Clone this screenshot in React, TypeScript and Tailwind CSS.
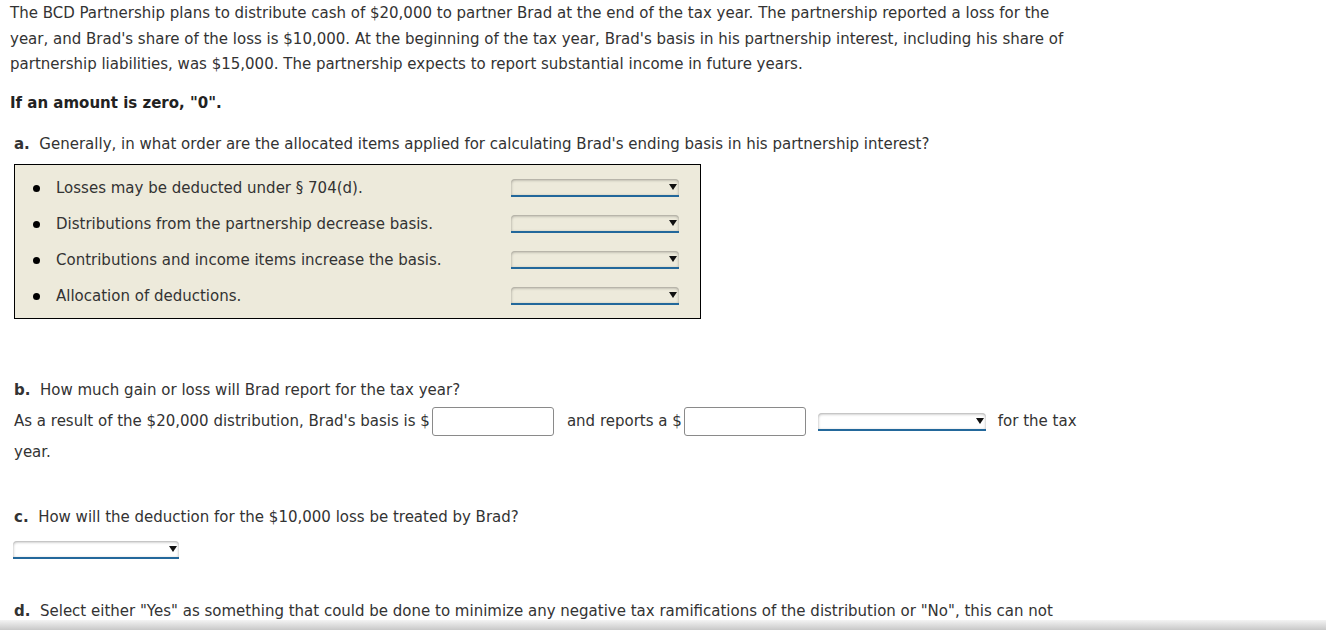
import React from 'react';

const orderItems = [
  'Losses may be deducted under § 704(d).',
  'Distributions from the partnership decrease basis.',
  'Contributions and income items increase the basis.',
  'Allocation of deductions.',
];

function Dropdown({ width }: { width: string }) {
  return (
    <span
      className={`relative inline-block h-[18px] rounded-t-[4px] border-b-2 border-[#23689b] shadow-[inset_0_1px_3px_rgba(0,0,0,0.35)] align-middle ${width}`}
    >
      <svg className="absolute right-[2px] top-[5px]" width="8" height="6" viewBox="0 0 8 6">
        <path d="M0 0 L8 0 L4 6 Z" fill="#111" />
      </svg>
    </span>
  );
}

function AmountInput() {
  return (
    <span className="ml-[2px] inline-block h-[29px] w-[122px] rounded-[3px] border border-[#8a8a8a] bg-white align-middle" />
  );
}

export default function App() {
  return (
    <div className="min-h-[630px] bg-white text-[15px] text-[#333] font-['DejaVu_Sans','Verdana',sans-serif]">
      <div className="px-[10px] pt-[1px]">
        <p className="leading-[25.7px] max-w-[1070px]">
          The BCD Partnership plans to distribute cash of $20,000 to partner Brad at the end of the tax year. The
          partnership reported a loss for the year, and Brad's share of the loss is $10,000. At the beginning of the tax
          year, Brad's basis in his partnership interest, including his share of partnership liabilities, was $15,000.
          The partnership expects to report substantial income in future years.
        </p>
        <p className="mt-[14px] font-bold text-[#222]">If an amount is zero, "0".</p>

        <div className="mt-[18px] pl-[4px]">
          <p>
            <span className="font-bold">a.</span>&nbsp; Generally, in what order are the allocated items applied for
            calculating Brad's ending basis in his partnership interest?
          </p>
          <div className="mt-[9px] w-[687px] border border-black bg-[#edeadb] pt-[5px] pb-[4px]">
            {orderItems.map((item) => (
              <div key={item} className="flex h-[36px] items-center">
                <span className="ml-[18px] mr-[16px] inline-block h-[7px] w-[7px] rounded-full bg-black" />
                <span className="w-[455px]">{item}</span>
                <Dropdown width="w-[168px]" />
              </div>
            ))}
          </div>
        </div>

        <div className="mt-[60px] pl-[4px]">
          <p>
            <span className="font-bold">b.</span>&nbsp; How much gain or loss will Brad report for the tax year?
          </p>
          <div className="mt-[5px] flex items-center">
            <span>As a result of the $20,000 distribution, Brad's basis is $</span>
            <AmountInput />
            <span className="ml-[13px]">and reports a $</span>
            <AmountInput />
            <span className="ml-[12px] mt-[2px]">
              <Dropdown width="w-[168px]" />
            </span>
            <span className="ml-[12px]">for the tax</span>
          </div>
          <p className="mt-[5px]">year.</p>
        </div>

        <div className="mt-[43px] pl-[4px]">
          <p>
            <span className="font-bold">c.</span>&nbsp; How will the deduction for the $10,000 loss be treated by Brad?
          </p>
          <div className="mt-[10px] -ml-[1px]">
            <Dropdown width="w-[166px]" />
          </div>
        </div>

        <div className="mt-[39px] pl-[4px]">
          <p>
            <span className="font-bold">d.</span>&nbsp; Select either "Yes" as something that could be done to minimize
            any negative tax ramifications of the distribution or "No", this can not
          </p>
        </div>
      </div>
      <div className="fixed bottom-0 left-0 right-0 h-[10px] bg-gradient-to-b from-[#f4f4f4] to-[#c8c8c8]" />
    </div>
  );
}
